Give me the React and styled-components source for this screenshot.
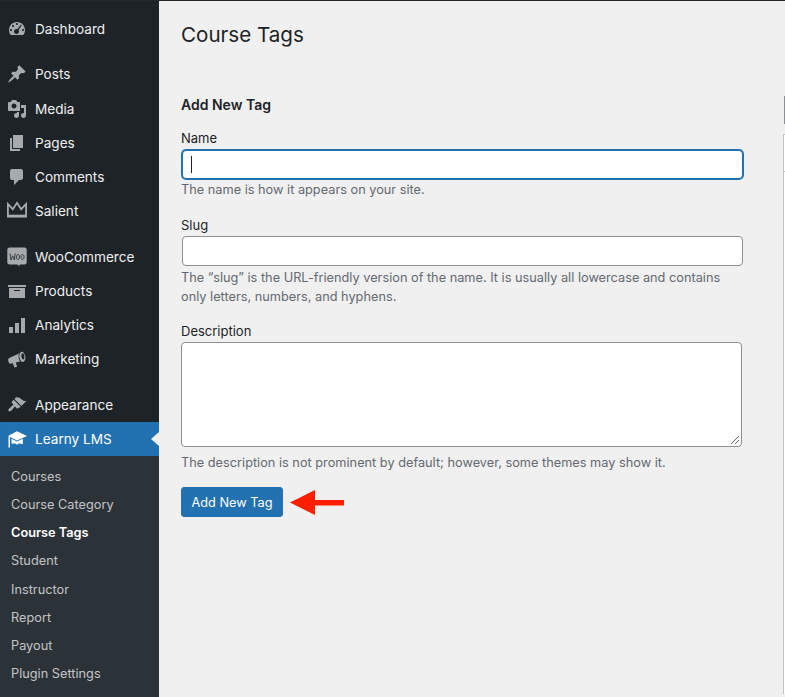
import React from "react";
import styled, { createGlobalStyle } from "styled-components";

const GlobalStyle = createGlobalStyle`
  html, body {
    margin: 0;
    padding: 0;
    background: #f0f0f0;
  }
  body {
    font-family: Inter, "Liberation Sans", sans-serif;
    -webkit-font-smoothing: antialiased;
  }
`;

const Page = styled.div`
  display: flex;
  width: 785px;
  height: 697px;
  overflow: hidden;
  border-top: 1px solid #23282d;
  box-sizing: border-box;
`;

const Sidebar = styled.nav`
  width: 159px;
  flex: none;
  background: #1d2327;
  padding-top: 11px;
  box-sizing: border-box;
`;

const SideColumn = styled.div`
  display: flex;
  flex-direction: column;
  height: 100%;
`;

const MenuItem = styled.div`
  position: relative;
  display: flex;
  align-items: center;
  flex: none;
  height: ${(p) => (p.$active ? 34 : 34.3)}px;
  margin-top: ${(p) => p.$gap || 0}px;
  padding-left: 7px;
  font-size: 13.6px;
  color: ${(p) => (p.$active ? "#fff" : "#f0f0f1")};
  background: ${(p) => (p.$active ? "#2271b1" : "transparent")};
  svg {
    flex: none;
    color: ${(p) => (p.$active ? "#fff" : "#a7aaad")};
  }
`;

const MenuLabel = styled.span`
  margin-left: 8px;
`;

const ActiveNotch = styled.span`
  position: absolute;
  right: 0;
  top: 10px;
  border-style: solid;
  border-color: transparent #f0f0f0 transparent transparent;
  border-width: 7px 8px 7px 0;
`;

const SubMenu = styled.div`
  background: #2c3338;
  padding-top: 7px;
  flex: 1;
`;

const SubItem = styled.div`
  height: 28.25px;
  line-height: 28px;
  padding-left: 11px;
  font-size: 12.75px;
  color: ${(p) => (p.$current ? "#fff" : "#c3c4c7")};
  font-weight: ${(p) => (p.$current ? 600 : 400)};
`;

const Main = styled.main`
  flex: 1;
  min-width: 0;
  padding: 20px 0 0 22px;
  color: #1d2327;
`;

const Title = styled.h1`
  margin: 0;
  font-size: 20.6px;
  font-weight: 400;
  line-height: 28px;
`;

const Columns = styled.div`
  display: flex;
`;

const FormColumn = styled.form`
  width: 562px;
  flex: none;
`;

const SideEdge = styled.div`
  margin-left: 41px;
  padding-top: 47px;
`;

const EdgeTab = styled.div`
  width: 1px;
  height: 28px;
  background: #8c8f94;
`;

const EdgeTable = styled.div`
  width: 2px;
  height: 560px;
  margin: 10px 0 0 -1px;
  box-sizing: border-box;
  background: #fff;
  border-left: 1px solid #c3c4c7;
  border-top: 1px solid #c3c4c7;
`;

const EdgeRow = styled.div`
  height: 36px;
  border-bottom: 1px solid #c3c4c7;
`;

const SectionTitle = styled.h2`
  margin: 46px 0 0;
  font-size: 14px;
  font-weight: 600;
  line-height: 20px;
`;

const Field = styled.div`
  margin-top: ${(p) => p.$gap}px;
`;

const Label = styled.label`
  display: block;
  font-size: 13px;
  line-height: 18px;
  margin-bottom: 2px;
`;

const Input = styled.div`
  position: relative;
  width: 561px;
  height: ${(p) => (p.$focused ? 29 : 30)}px;
  margin: ${(p) => (p.$focused ? 3 : 2)}px 0 0 1px;
  box-sizing: border-box;
  background: #fff;
  border: 1px solid #8c8f94;
  border-radius: 4px;
  ${(p) => p.$focused && "border-color: #2271b1; box-shadow: 0 0 0 1px #2271b1;"}
`;

const Caret = styled.span`
  position: absolute;
  left: 8px;
  top: 5px;
  width: 1px;
  height: 17px;
  background: #1d2327;
`;

const TextArea = styled.div`
  position: relative;
  width: 561px;
  height: 105px;
  box-sizing: border-box;
  background: #fff;
  border: 1px solid #8c8f94;
  border-radius: 4px;
`;

const ResizeGrip = styled.svg`
  position: absolute;
  right: 1px;
  bottom: 1px;
`;

const Hint = styled.p`
  margin: ${(p) => p.$top || 2}px 0 0;
  font-size: 12.75px;
  line-height: 19px;
  color: #646970;
`;

const SubmitRow = styled.div`
  display: flex;
  align-items: center;
  gap: 7px;
  margin-top: 15px;
`;

const SubmitButton = styled.button`
  display: block;
  width: 102px;
  height: 30px;
  padding: 0;
  background: #2271b1;
  color: #fff;
  border: 1px solid #2271b1;
  border-radius: 3px;
  font-family: inherit;
  font-size: 12.75px;
`;

const Dashboard = () => (
  <svg width="20" height="20" viewBox="0 0 20 20" fill="currentColor">
    <path d="M3.76 16h12.48c1.1-1.37 1.76-3.11 1.76-5 0-4.42-3.58-8-8-8s-8 3.58-8 8c0 1.89.66 3.63 1.76 5zM10 4c.55 0 1 .45 1 1s-.45 1-1 1-1-.45-1-1 .45-1 1-1zM6 6c.55 0 1 .45 1 1s-.45 1-1 1-1-.45-1-1 .45-1 1-1zm8.01-.41l.83.56-3.33 4.87c.31.43.49.95.49 1.51 0 1.38-1.12 2.47-2.5 2.47S7 13.9 7 12.53s1.12-2.5 2.5-2.5c.24 0 .46.04.68.1zM4 10c.55 0 1 .45 1 1s-.45 1-1 1-1-.45-1-1 .45-1 1-1zm12 0c.55 0 1 .45 1 1s-.45 1-1 1-1-.45-1-1 .45-1 1-1z" fillRule="evenodd" />
  </svg>
);

const Pin = () => (
  <svg width="20" height="20" viewBox="0 0 20 20" fill="currentColor">
    <path d="M10.44 3.02l1.82-1.82 6.36 6.35-1.83 1.82c-1.05-.68-2.48-.57-3.41.36l-.75.75c-.92.93-1.04 2.35-.35 3.41l-1.83 1.82-2.41-2.41-2.8 2.79c-.42.42-3.38 2.71-3.8 2.29s1.86-3.39 2.28-3.81l2.79-2.79L4.1 9.36l1.83-1.82c1.05.69 2.48.57 3.4-.36l.75-.75c.93-.92 1.05-2.35.36-3.41z" />
  </svg>
);

const Media = () => (
  <svg width="20" height="20" viewBox="0 0 20 20" fill="currentColor">
    <path d="M13 11V4c0-.55-.45-1-1-1h-1.67L9 1H5L3.67 3H2c-.55 0-1 .45-1 1v7c0 .55.45 1 1 1h10c.55 0 1-.45 1-1zM7 4.5c1.38 0 2.5 1.12 2.5 2.5S8.38 9.5 7 9.5 4.5 8.38 4.5 7 5.62 4.5 7 4.5zM14 6h5v10.5c0 1.38-1.12 2.5-2.5 2.5S14 17.88 14 16.5s1.12-2.5 2.5-2.5c.17 0 .34.02.5.05V9h-3V6zm-4 8.05V13h2v3.5c0 1.38-1.12 2.5-2.5 2.5S7 17.88 7 16.5 8.12 14 9.5 14c.17 0 .34.02.5.05z" fillRule="evenodd" />
  </svg>
);

const Pages = () => (
  <svg width="20" height="20" viewBox="0 0 20 20" fill="currentColor">
    <path d="M6 15V2h10v13H6zm-1 1h8v2H3V5h2v11z" />
  </svg>
);

const Comments = () => (
  <svg width="20" height="20" viewBox="0 0 20 20" fill="currentColor">
    <path d="M5 2h9c1.1 0 2 .9 2 2v7c0 1.1-.9 2-2 2h-2l-5 5v-5H5c-1.1 0-2-.9-2-2V4c0-1.1.9-2 2-2z" />
  </svg>
);

const Crown = () => (
  <svg width="20" height="20" viewBox="0 0 20 20" fill="none" stroke="currentColor" strokeWidth="1.8">
    <path d="M0.9 15.6V3l4.900 5.200L10 1.800l4.200 6.400L19.100 3v12.600z" />
    <path d="M0.9 14.900h18.200" strokeWidth="2.400" />
  </svg>
);

const Woo = () => (
  <svg width="20" height="20" viewBox="0 0 20 20">
    <rect x="0.300" y="0.500" width="19.400" height="17" rx="2.200" fill="#a7aaad" />
    <path d="M10 17l2.500 2.500V17z" fill="#a7aaad" />
    <path d="M3 6.500l1 6.500 1.700-4.200L7.300 13l1-6.500M11 7.500c-1 0-1.500 1.200-1.500 2.500s.5 2.500 1.500 2.500 1.500-1.200 1.500-2.500-.5-2.500-1.500-2.500zM15.500 7.500c-1 0-1.500 1.200-1.500 2.500s.5 2.500 1.500 2.500S17 11.300 17 10s-.5-2.500-1.500-2.500z" fill="none" stroke="#2c3338" strokeWidth="0.900" />
  </svg>
);

const Archive = () => (
  <svg width="20" height="20" viewBox="0 0 20 20" fill="currentColor">
    <path d="M19 4v2H1V4h18zM2 7h16v10H2V7zm11 3V9H7v1h6z" fillRule="evenodd" />
  </svg>
);

const Chart = () => (
  <svg width="20" height="20" viewBox="0 0 20 20" fill="currentColor">
    <path d="M2 12h4v6H2zM8 8h4v10H8zM14 3h4v15h-4z" />
  </svg>
);

const Megaphone = () => (
  <svg width="20" height="20" viewBox="0 0 20 20" fill="currentColor">
    <path d="M18.15 5.94c.46 1.62.38 3.22-.02 4.49-.42 1.28-1.14 2.22-2.02 2.43-.88.22-1.72-.3-2.4-1.16-.72-.9-1.25-2.2-1.4-3.62-.15-1.43.02-2.75.46-3.72.44-.98 1.16-1.61 2.06-1.67.9-.05 1.64.56 2.2 1.45.24.4.44.94.62 1.8zM15.5 4.3c-.82.06-1.3 1.5-1.1 3.22.2 1.7 1.05 3.03 1.87 2.97.82-.07 1.3-1.51 1.1-3.22-.2-1.7-1.05-3.03-1.87-2.97zM12.1 4.4c-.5 1.2-.7 2.7-.5 4.2.2 1.5.7 2.9 1.5 3.9l-4.3 1 1.3 4.2-2.7.8-1.6-4.3-1.6.4C3 15 1.900 14.100 1.600 12.900L1.200 11.400c-.3-1.200.4-2.400 1.600-2.700z" fillRule="evenodd" />
  </svg>
);

const Brush = () => (
  <svg width="20" height="20" viewBox="0 0 20 20" fill="currentColor">
    <path d="M14.48 11.06L7.41 3.99l1.5-1.5c.5-.56 2.3-.47 3.51.32 1.21.8 1.43 1.28 2.91 2.1 1.18.64 2.45 1.26 4.23.91zm-.71.71L6.7 4.7 4.93 6.47c-.39.39-.39 1.02 0 1.41l1.06 1.06c.39.39.39 1.03 0 1.42-.6.6-1.43 1.11-2.21 1.69-.35.26-.7.53-1.01.84C1.43 13.71.96 15.5 1.53 16.06c.56.57 2.36.1 3.17-.71.3-.31.57-.66.83-1.01.58-.78 1.09-1.61 1.69-2.21.39-.39 1.02-.39 1.41 0l1.06 1.06c.39.39 1.02.39 1.41 0z" />
  </svg>
);

const Cap = () => (
  <svg width="20" height="20" viewBox="0 0 20 20" fill="currentColor">
    <path d="M1 7l9-4.800L20 7l-10 4.500z" />
    <path d="M4.500 9.800l5.500 2.600 5.800-2.600v5.400c-3-1.200-4.600-.8-5.800.6-1.300-1.300-3-1.700-5.500-.8z" />
    <path d="M1.500 7.500h1.500v9.800l-.2 1.200H1.500z" />
  </svg>
);

const Arrow = () => (
  <svg width="54" height="25" viewBox="0 0 54 25" fill="#fe1e00">
    <path d="M0 12.500L25 0v10h29v5.500H25V25z" />
  </svg>
);

const mainMenu = [
  { label: "Dashboard", icon: <Dashboard /> },
  { label: "Posts", icon: <Pin />, gap: 10.8 },
  { label: "Media", icon: <Media /> },
  { label: "Pages", icon: <Pages /> },
  { label: "Comments", icon: <Comments /> },
  { label: "Salient", icon: <Crown /> },
  { label: "WooCommerce", icon: <Woo />, gap: 10.8 },
  { label: "Products", icon: <Archive /> },
  { label: "Analytics", icon: <Chart /> },
  { label: "Marketing", icon: <Megaphone /> },
  { label: "Appearance", icon: <Brush />, gap: 10.8 },
];

const subMenu = ["Courses", "Course Category", "Course Tags", "Student", "Instructor", "Report", "Payout", "Plugin Settings"];

export default function App() {
  return (
    <Page>
      <GlobalStyle />
      <Sidebar>
        <SideColumn>
          {mainMenu.map((item) => (
            <MenuItem key={item.label} $gap={item.gap}>
              {item.icon}
              <MenuLabel>{item.label}</MenuLabel>
            </MenuItem>
          ))}
          <MenuItem $active>
            <Cap />
            <MenuLabel>Learny LMS</MenuLabel>
            <ActiveNotch />
          </MenuItem>
          <SubMenu>
            {subMenu.map((label) => (
              <SubItem key={label} $current={label === "Course Tags"}>
                {label}
              </SubItem>
            ))}
          </SubMenu>
        </SideColumn>
      </Sidebar>
      <Main>
        <Title>Course Tags</Title>
        <Columns>
          <FormColumn>
            <SectionTitle>Add New Tag</SectionTitle>
            <Field $gap={14}>
              <Label>Name</Label>
              <Input $focused>
                <Caret />
              </Input>
              <Hint $top={1}>The name is how it appears on your site.</Hint>
            </Field>
            <Field $gap={17}>
              <Label>Slug</Label>
              <Input />
              <Hint>
                The “slug” is the URL-friendly version of the name. It is usually all lowercase and contains
                only letters, numbers, and hyphens.
              </Hint>
            </Field>
            <Field $gap={16}>
              <Label>Description</Label>
              <TextArea>
                <ResizeGrip width="10" height="10" viewBox="0 0 10 10" stroke="#646970">
                  <path d="M1 9l8-8M5 9l4-4" />
                </ResizeGrip>
              </TextArea>
              <Hint $top={6}>The description is not prominent by default; however, some themes may show it.</Hint>
            </Field>
            <SubmitRow>
              <SubmitButton type="button">Add New Tag</SubmitButton>
              <Arrow />
            </SubmitRow>
          </FormColumn>
          <SideEdge>
            <EdgeTab />
            <EdgeTable>
              <EdgeRow />
            </EdgeTable>
          </SideEdge>
        </Columns>
      </Main>
    </Page>
  );
}
